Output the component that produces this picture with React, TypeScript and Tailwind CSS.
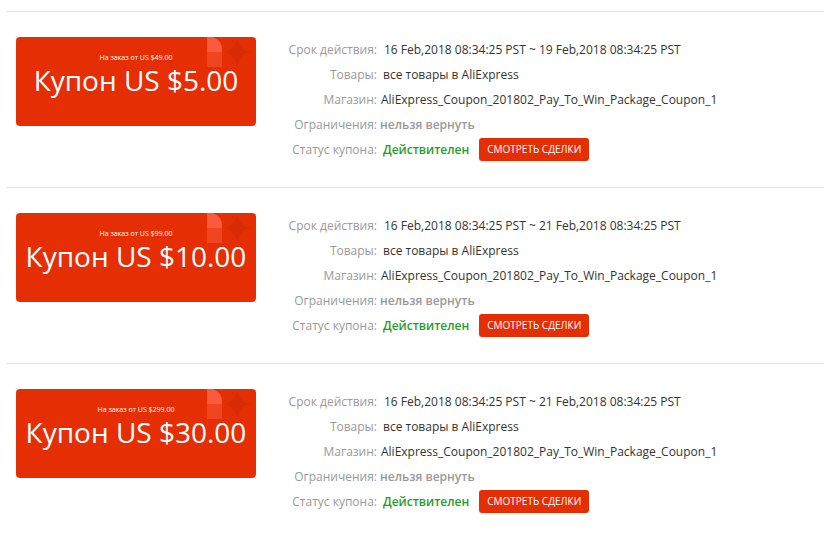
import React from "react";

const coupons = [
  { min: "US $49.00", amount: "US $5.00", end: "19 Feb,2018 08:34:25 PST" },
  { min: "US $99.00", amount: "US $10.00", end: "21 Feb,2018 08:34:25 PST" },
  { min: "US $299.00", amount: "US $30.00", end: "21 Feb,2018 08:34:25 PST" },
];

function Deco() {
  return (
    <svg width="50" height="40" viewBox="0 0 50 40" className="absolute right-0 top-0">
      <path d="M1 0 H4 A12 12 0 0 1 16 12 V15 H1 Z" fill="#fb5a3b" />
      <path d="M1 15 H16 V30 H1 Z" fill="#f0461f" />
      <path d="M16 0 H50 V30 H16 Z" fill="#e0300a" opacity="0.35" />
      <path d="M31 0 A15 15 0 0 0 46 15 A15 15 0 0 0 31 30 A15 15 0 0 0 16 15 A15 15 0 0 0 31 0 Z" fill="#d82a05" />
    </svg>
  );
}

function Row({ label, children }: { label: string; children: React.ReactNode }) {
  return (
    <div className="flex h-[25px] items-center">
      <div className="w-[100px] shrink-0 text-right text-[#999]">{label}</div>
      <div className="ml-[4px] flex items-center">{children}</div>
    </div>
  );
}

export default function App() {
  return (
    <div
      className="w-[824px] h-[539px] bg-white pt-[11px] pl-[6px] text-[12px]"
      style={{ fontFamily: '"Open Sans", "Noto Sans", sans-serif' }}
    >
      {coupons.map((c, i) => (
        <div key={i} className="border-t border-[#e3e3e3]">
          <div className="flex py-[25px] pl-[10px]">
            <div className="relative h-[89px] w-[240px] shrink-0 overflow-hidden rounded-[4px] bg-[#e62e04] text-white">
              <Deco />
              <div className="relative flex flex-col items-center pt-[16px]">
                <div className="text-[7px] leading-[10px]">На заказ от {c.min}</div>
                <div className="text-[28px] leading-[34px]">Купон {c.amount}</div>
              </div>
            </div>
            <div className="ml-[21px] flex flex-col">
              <Row label="Срок действия:">
                <span className="ml-[3px] text-[#333]">16 Feb,2018 08:34:25 PST ~ {c.end}</span>
              </Row>
              <Row label="Товары:">
                <span className="ml-[2px] text-[#333]">все товары в AliExpress</span>
              </Row>
              <Row label="Магазин:">
                <span className="text-[#333]">AliExpress_Coupon_201802_Pay_To_Win_Package_Coupon_1</span>
              </Row>
              <Row label="Ограничения:">
                <span className="-ml-[1px] font-semibold text-[#999]">нельзя вернуть</span>
              </Row>
              <Row label="Статус купона:">
                <span className="ml-[2px] font-semibold text-[#1f9e1f]">Действителен</span>
                <button className="ml-[10px] h-[23px] w-[110px] rounded-[3px] bg-[#e62e04] text-[10px] uppercase text-white">
                  Смотреть сделки
                </button>
              </Row>
            </div>
          </div>
        </div>
      ))}
    </div>
  );
}
